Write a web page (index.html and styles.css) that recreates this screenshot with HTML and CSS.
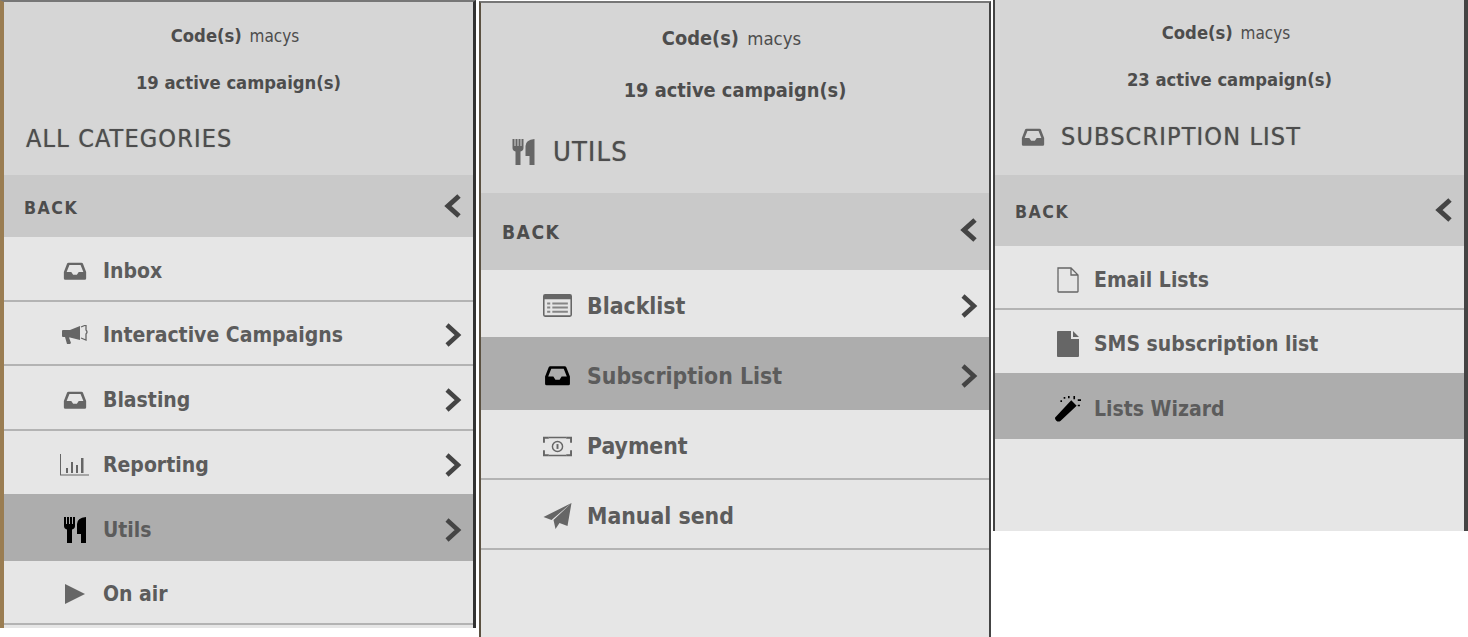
FILE: index.html
```html
<!DOCTYPE html>
<html lang="en">
<head>
  <meta charset="UTF-8" />
  <title>Campaign menu</title>
  <meta name="viewport" content="width=device-width, initial-scale=1.0">
  <link rel="stylesheet" href="styles.css">
</head>
<body>
  <svg class="sprite" xmlns="http://www.w3.org/2000/svg">
    <symbol id="i-inbox" viewBox="-2 0 28 20">
      <path fill-rule="evenodd" d="M5 1h14q1 0 1.500 1L24 11v7a1.500 1.500 0 0 1-1.500 1.500h-21A1.500 1.500 0 0 1 0 18v-7L3.500 2Q4 1 5 1zM6 3.500 3 11h5l2 3h4l2-3h5l-3-7.500z"/>
    </symbol>
    <symbol id="i-bullhorn" viewBox="0 0 26 20">
      <path d="M0 6q0-1 1-1h7l10-4v14L8 12.500H7l2 5.500-1 1H5L3 12H1q-1 0-1-1z"/>
      <path fill="none" stroke="currentColor" stroke-width="1.300" d="M19 2l5-2v5q2 2 0 4v6l-5-2"/>
    </symbol>
    <symbol id="i-chart" viewBox="0 0 29 22">
      <path d="M0 0h1v20.500h28v1H0z"/>
      <path d="M6 14h2v5H6zM11 8h2v11h-2zM16 11h2v8h-2zM21 4h2.500v15H21z"/>
    </symbol>
    <symbol id="i-cutlery" viewBox="0 0 22 26">
      <path d="M0 0h2v7h1V0h2v7h1V0h2v7h1V0h2v9q0 2.500-3 3.500V26H3V12.500Q0 11.500 0 9z"/>
      <path d="M22 0v26h-5v-9h-4V7q0-6 9-7z"/>
    </symbol>
    <symbol id="i-play" viewBox="0 0 22 22">
      <path d="M0 0l22 11L0 22z"/>
    </symbol>
    <symbol id="i-list" viewBox="0 0 28 22">
      <path fill-rule="evenodd" d="M2 0h24a2 2 0 0 1 2 2v18a2 2 0 0 1-2 2H2a2 2 0 0 1-2-2V2a2 2 0 0 1 2-2zM1.500 5v15q0 .5.500.5h24q.5 0 .5-.5V5z"/>
      <path d="M4 8h3v2H4zM9 8h15v2H9zM4 12h3v2H4zM9 12h15v2H9zM4 16h3v2H4zM9 16h15v2H9z" opacity=".75"/>
    </symbol>
    <symbol id="i-money" viewBox="0 0 30 20">
      <path d="M0 0h6v2H2v4H0zM24 0h6v6h-2V2h-4zM0 14h2v4h4v2H0zM28 14h2v6h-6v-2h4z"/>
      <path d="M6 0h18v1.500H6zM6 18.500h18V20H6z"/>
      <path fill-rule="evenodd" d="M15 4a6 6 0 1 0 0 12 6 6 0 0 0 0-12zm0 1.500a4.500 4.500 0 1 1 0 9 4.500 4.500 0 0 1 0-9z"/>
      <path d="M14 7.500h2v5h-2z"/>
    </symbol>
    <symbol id="i-send" viewBox="0 0 28 26">
      <path d="M28 0l-4 23-8-3-4 6-2-9zM0 14L28 0 8 17z"/>
    </symbol>
    <symbol id="i-file-o" viewBox="0 0 22 26">
      <path fill="none" stroke="currentColor" stroke-width="1.300" d="M1 1h13l7 7v16.500a.5.500 0 0 1-.5.500h-19a.5.500 0 0 1-.5-.5zM14 1v7h7"/>
    </symbol>
    <symbol id="i-file" viewBox="0 0 22 26">
      <path d="M1 0h13v8h8v17a1 1 0 0 1-1 1H1a1 1 0 0 1-1-1V1a1 1 0 0 1 1-1zM16 0l6 6h-6z"/>
    </symbol>
    <symbol id="i-magic" viewBox="0 0 24 24">
      <path d="M15 4l5 5L5 23q-2 1.500-4-.5T1 19z"/>
      <path d="M8 1h1.500v1.500H8zM12 0h1.500v2H12zM17 0h1.500v3H17zM21 3h3v1.500h-3zM21 8h2v1.500h-2zM5 4h1.500v1.500H5z"/>
    </symbol>
    <symbol id="i-right" viewBox="0 0 18 24">
      <path fill="none" stroke="currentColor" stroke-width="4.500" d="M3 2l11 10L3 22"/>
    </symbol>
    <symbol id="i-left" viewBox="0 0 18 24">
      <path fill="none" stroke="currentColor" stroke-width="5" d="M15 2L4 12l11 10"/>
    </symbol>
  </svg>

  <div class="page">
    <!-- all categories -->
    <section class="panel panel-all">
      <header class="head">
        <div class="code">Code(s) <small>macys</small></div>
        <div class="active">19 active campaign(s)</div>
        <h2 class="title">All categories</h2>
      </header>
      <div class="back">Back <svg class="arrow"><use href="#i-left"/></svg></div>
      <ul class="menu">
        <li class="row"><svg class="icon"><use href="#i-inbox"/></svg>Inbox</li>
        <li class="row"><svg class="icon"><use href="#i-bullhorn"/></svg>Interactive Campaigns<svg class="arrow"><use href="#i-right"/></svg></li>
        <li class="row"><svg class="icon"><use href="#i-inbox"/></svg>Blasting<svg class="arrow"><use href="#i-right"/></svg></li>
        <li class="row"><svg class="icon wide"><use href="#i-chart"/></svg>Reporting<svg class="arrow"><use href="#i-right"/></svg></li>
        <li class="row selected"><svg class="icon tall"><use href="#i-cutlery"/></svg>Utils<svg class="arrow"><use href="#i-right"/></svg></li>
        <li class="row"><svg class="icon"><use href="#i-play"/></svg>On air</li>
      </ul>
    </section>

    <!-- utils -->
    <section class="panel panel-utils">
      <header class="head">
        <div class="code">Code(s) <small>macys</small></div>
        <div class="active">19 active campaign(s)</div>
        <h2 class="title"><svg class="icon tall"><use href="#i-cutlery"/></svg>Utils</h2>
      </header>
      <div class="back">Back <svg class="arrow"><use href="#i-left"/></svg></div>
      <ul class="menu">
        <li class="row"><svg class="icon"><use href="#i-list"/></svg>Blacklist<svg class="arrow"><use href="#i-right"/></svg></li>
        <li class="row selected"><svg class="icon"><use href="#i-inbox"/></svg>Subscription List<svg class="arrow"><use href="#i-right"/></svg></li>
        <li class="row"><svg class="icon"><use href="#i-money"/></svg>Payment</li>
        <li class="row"><svg class="icon tall"><use href="#i-send"/></svg>Manual send</li>
      </ul>
    </section>

    <!-- subscription list -->
    <section class="panel panel-subs">
      <header class="head">
        <div class="code">Code(s) <small>macys</small></div>
        <div class="active">23 active campaign(s)</div>
        <h2 class="title"><svg class="icon"><use href="#i-inbox"/></svg>Subscription List</h2>
      </header>
      <div class="back">Back <svg class="arrow"><use href="#i-left"/></svg></div>
      <ul class="menu">
        <li class="row"><svg class="icon"><use href="#i-file-o"/></svg>Email Lists</li>
        <li class="row"><svg class="icon"><use href="#i-file"/></svg>SMS subscription list</li>
        <li class="row selected"><svg class="icon"><use href="#i-magic"/></svg>Lists Wizard</li>
      </ul>
    </section>
  </div>
</body>
</html>
```

FILE: styles.css
```css
body {
  margin: 0;
  background: #fff;
  font-family: "DejaVu Sans Condensed", "DejaVu Sans", sans-serif;
  color: #4d4d4d;
}

.sprite {
  display: none;
}

.page {
  display: flex;
  align-items: flex-start;
  height: 637px;
  overflow: hidden;
}

.panel {
  box-sizing: border-box;
  background: #e6e6e6;
  flex: none;
}

.panel-all {
  width: 476px;
  height: 628px;
  border-top: 2px solid #777;
  border-left: 4px solid #9a7d52;
  border-right: 3px solid #333;
  --text: 21px;
  --head-h: 173px;
  --head-top: 20px;
  --head-gap: 19px;
  --title-top: 25px;
  --title-left: 22px;
  --back-h: 62px;
  --back-left: 20px;
  --back-shift: 4px;
  --row-h: 64.500px;
  --row-left: 58px;
  --row-shift: 5px;
  --icon-w: 26px;
  --icon-h: 20px;
  --icon-gap: 15px;
  --before-selected: 1px;
  --selected-extra: 2px;
}

.panel-utils {
  width: 512px;
  height: 637px;
  margin-left: 3px;
  margin-top: 1px;
  border-top: 2px solid #777;
  border-left: 2px solid #5b5141;
  border-right: 2px solid #444;
  --text: 22.800px;
  --head-h: 190px;
  --head-top: 22px;
  --head-gap: 24px;
  --title-top: 30px;
  --title-left: 28px;
  --back-h: 77px;
  --back-left: 21px;
  --back-shift: 2px;
  --row-h: 70px;
  --row-left: 62px;
  --row-shift: 4px;
  --icon-w: 29px;
  --icon-h: 23px;
  --icon-gap: 15px;
  --before-selected: 3px;
  --selected-extra: 3px;
}

.panel-subs {
  width: 475px;
  height: 531px;
  margin-left: 2px;
  border-left: 2px solid #444;
  border-right: 4px solid #444;
  --text: 21px;
  --head-h: 175px;
  --head-top: 19px;
  --head-gap: 19px;
  --title-top: 26px;
  --title-left: 25px;
  --back-h: 71px;
  --back-left: 20px;
  --back-shift: 2px;
  --row-h: 64px;
  --row-left: 60px;
  --row-shift: 5px;
  --icon-w: 26px;
  --icon-h: 26px;
  --icon-gap: 13px;
  --before-selected: 1px;
  --selected-extra: 2px;
}

.head {
  box-sizing: border-box;
  height: var(--head-h);
  padding-top: var(--head-top);
  background: #d6d6d6;
  text-align: center;
  font-size: calc(var(--text) * 0.87);
  font-weight: bold;
}

.code,
.active {
  line-height: 28px;
}

.code {
  padding-right: 7px;
  margin-bottom: var(--head-gap);
}

.code small {
  font-size: 0.93em;
  font-weight: normal;
  margin-left: 2px;
}

.title {
  display: flex;
  align-items: center;
  margin: var(--title-top) 0 0 var(--title-left);
  font-size: calc(var(--text) * 1.19);
  font-weight: normal;
  line-height: 34px;
  letter-spacing: 1.150px;
  text-transform: uppercase;
  text-align: left;
  text-shadow: 0 0 1px #777;
}

.panel-subs .title .icon {
  width: 26px;
  height: 20px;
  margin-right: 15px;
}

.back {
  box-sizing: border-box;
  display: flex;
  align-items: center;
  height: var(--back-h);
  padding: var(--back-shift) 11px 0 var(--back-left);
  background: #c9c9c9;
  font-size: calc(var(--text) * 0.84);
  font-weight: bold;
  letter-spacing: 1.500px;
  text-transform: uppercase;
}

.back .arrow {
  margin-bottom: 4px;
}

.panel-utils .back .arrow {
  margin-bottom: 6px;
}

.menu {
  list-style: none;
  margin: 0;
  padding: 0;
}

.row {
  box-sizing: border-box;
  display: flex;
  align-items: center;
  height: var(--row-h);
  padding: var(--row-shift) 11px 0 var(--row-left);
  border-bottom: 2px solid #b3b3b3;
  font-size: var(--text);
  font-weight: bold;
  color: #5c5c5c;
}

/* the row above a selected one loses its line */
.row:has(+ .selected) {
  height: calc(var(--row-h) - var(--before-selected));
  border-bottom: 0;
}

.row.selected {
  background: #adadad;
  height: calc(var(--row-h) + var(--selected-extra));
  border-bottom: 0;
}

.icon {
  flex: none;
  width: var(--icon-w);
  height: var(--icon-h);
  margin-right: var(--icon-gap);
  fill: #666;
  color: #666;
}

.icon.tall {
  height: 26px;
}

.icon.wide {
  width: 29px;
  height: 22px;
  margin-left: -2px;
  margin-right: 14px;
}

.selected .icon {
  fill: #000;
  color: #000;
}

.arrow {
  flex: none;
  width: 18px;
  height: 24px;
  margin-left: auto;
  color: #444;
}
```
